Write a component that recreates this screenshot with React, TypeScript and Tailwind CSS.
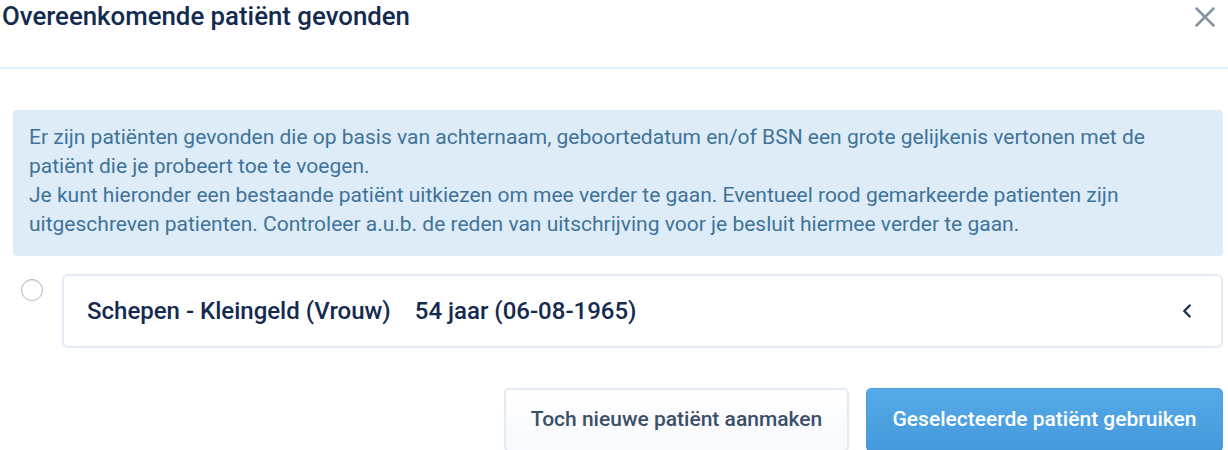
import { X, ChevronLeft } from "lucide-react";

export default function App() {
  return (
    <div className="w-[1228px] h-[450px] overflow-hidden bg-white font-['Roboto',sans-serif]">
      <div className="flex h-[69px] items-start justify-between border-b-2 border-[#e4edf8] pl-[2px] pr-[6px]">
        <h1 className="text-[25.8px] font-medium leading-[32px] text-[#132b4f]">
          Overeenkomende patiënt gevonden
        </h1>
        <X className="mt-[0px] h-[34px] w-[34px] text-[#8493a6]" strokeWidth={1.8} />
      </div>

      <div className="px-[13px] pr-[5px] pt-[41px]">
        <div className="rounded-[4px] bg-[#ddecf7] px-[16px] pt-[13px] pb-[17px] text-[21px] leading-[29px] text-[#41739a]">
          <p>
            Er zijn patiënten gevonden die op basis van achternaam, geboortedatum en/of BSN een grote gelijkenis vertonen met de
            <br />
            patiënt die je probeert toe te voegen.
          </p>
          <p>
            Je kunt hieronder een bestaande patiënt uitkiezen om mee verder te gaan. Eventueel rood gemarkeerde patienten zijn
            <br />
            uitgeschreven patienten. Controleer a.u.b. de reden van uitschrijving voor je besluit hiermee verder te gaan.
          </p>
        </div>

        <div className="mt-[18px] flex items-start gap-[19px]">
          <span className="mt-[5px] ml-[8px] h-[22px] w-[22px] rounded-full border border-[#b5b5b5] bg-white shadow-[inset_0_1px_1px_rgba(0,0,0,0.08)]" />
          <div className="flex h-[74px] flex-1 items-center justify-between rounded-[6px] border-2 border-[#e2eaf6] pl-[23px] pr-[23px]">
            <div className="flex items-center gap-[24px] text-[24px] font-medium text-[#142a50]">
              <span>Schepen - Kleingeld (Vrouw)</span>
              <span>54 jaar (06-08-1965)</span>
            </div>
            <ChevronLeft className="h-[22px] w-[22px] text-[#142a50]" strokeWidth={2.5} />
          </div>
        </div>

        <div className="mt-[40px] flex justify-end gap-[17px]">
          <button className="h-[64px] w-[345px] rounded-[5px] border-2 border-[#e2eaf6] bg-gradient-to-b from-white to-[#f7f9fc] pb-[1px] text-[21px] font-medium text-[#3b4f69]">
            Toch nieuwe patiënt aanmaken
          </button>
          <button className="h-[64px] w-[357px] rounded-[5px] border border-[#4b9fe0] bg-gradient-to-b from-[#55aae7] to-[#4599dc] pb-[1px] text-[21px] font-medium text-white">
            Geselecteerde patiënt gebruiken
          </button>
        </div>
      </div>
    </div>
  );
}
